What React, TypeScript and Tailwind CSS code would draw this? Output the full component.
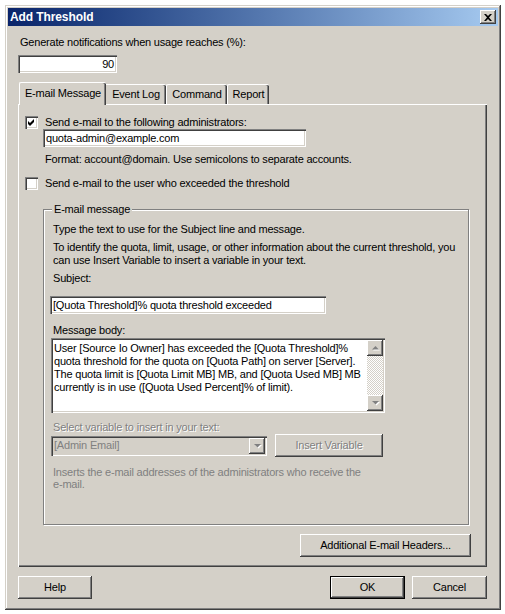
import React from "react";

const raised =
  "shadow-[inset_-1px_-1px_0_#404040,inset_1px_1px_0_#ffffff,inset_-2px_-2px_0_#808080,inset_2px_2px_0_#d4d0c8]";
const sunken =
  "shadow-[inset_1px_1px_0_#808080,inset_2px_2px_0_#404040,inset_-1px_-1px_0_#ffffff,inset_-2px_-2px_0_#d4d0c8]";

function Check({ checked }: { checked?: boolean }) {
  return (
    <div className={`w-[13px] h-[13px] bg-white shrink-0 ${sunken} flex items-center justify-center`}>
      {checked && (
        <svg width="13" height="13" viewBox="0 0 13 13">
          <path d="M3 5 L5 7 L9 3 L9 6 L5 10 L3 8 Z" fill="#000" />
        </svg>
      )}
    </div>
  );
}

function Arrow({ up, disabled }: { up?: boolean; disabled?: boolean }) {
  const c = disabled ? "#808080" : "#000";
  return (
    <svg width="7" height="4" viewBox="0 0 7 4" className="overflow-visible">
      {disabled && (
        <path d={up ? "M4.5 1 L8 4.5 L1 4.5 Z" : "M1 1 L8 1 L4.5 4.5 Z"} fill="#fff" />
      )}
      <path d={up ? "M3.5 0 L7 3.5 L0 3.5 Z" : "M0 0 L7 0 L3.5 3.5 Z"} fill={c} />
    </svg>
  );
}

export default function App() {
  return (
    <div className="w-[505px] h-[614px] bg-white pt-[5px] pl-[5px] font-['Liberation_Sans',Arial,sans-serif] text-[11px] leading-[13px] tracking-[-0.2px] text-black whitespace-nowrap">
      <div className="w-[496px] h-[605px] bg-[#d4d0c8] p-[3px] flex flex-col shadow-[inset_-1px_-1px_0_#404040,inset_1px_1px_0_#d4d0c8,inset_-2px_-2px_0_#808080,inset_2px_2px_0_#ffffff]">
        {/* Title bar */}
        <div className="h-[18px] bg-linear-to-r from-[#0a246a] to-[#a6caf0] flex items-center justify-between pl-[2px] pr-[2px]">
          <span className="text-white font-bold text-[12px] leading-[14px] tracking-[-0.1px]">Add Threshold</span>
          <div className={`w-[16px] h-[14px] bg-[#d4d0c8] ${raised} flex items-center justify-center`}>
            <svg width="8" height="7" viewBox="0 0 8 7">
              <path d="M0 0 H2 L4 2 L6 0 H8 L5 3.5 L8 7 H6 L4 5 L2 7 H0 L3 3.5 Z" fill="#000" />
            </svg>
          </div>
        </div>

        {/* Body */}
        <div className="flex flex-col pl-[10px] pr-[11px]">
          <div className="mt-[10px] ml-[2px]">Generate notifications when usage reaches (%):</div>
          <div className={`mt-[6px] w-[99px] h-[18px] bg-white ${sunken} flex items-center justify-end pr-[3px]`}>
            90
          </div>

          {/* Tabs */}
          <div className="mt-[9px] h-[22px] flex items-end pl-[1px]">
            <div className="relative z-10 -mb-px h-[23px] w-[87px] bg-[#d4d0c8] flex items-center justify-center rounded-tl-[2px] rounded-tr-[2px] border-l border-t border-white shadow-[inset_-1px_0_0_#404040,inset_-2px_0_0_#808080] pb-[2px]">
              E-mail Message
            </div>
            <div className="h-[20px] w-[60px] flex items-center justify-center rounded-tr-[2px] border-t border-white shadow-[inset_-1px_0_0_#404040,inset_-2px_0_0_#808080]">
              Event Log
            </div>
            <div className="h-[20px] w-[61px] flex items-center justify-center rounded-tl-[2px] rounded-tr-[2px] border-l border-t border-white shadow-[inset_-1px_0_0_#404040,inset_-2px_0_0_#808080]">
              Command
            </div>
            <div className="h-[20px] w-[42px] flex items-center justify-center rounded-tl-[2px] rounded-tr-[2px] border-l border-t border-white shadow-[inset_-1px_0_0_#404040,inset_-2px_0_0_#808080]">
              Report
            </div>
          </div>

          {/* Panel */}
          <div className="h-[463px] border-l border-t border-white shadow-[inset_-1px_-1px_0_#404040,inset_-2px_-2px_0_#808080] pl-[6px] flex flex-col">
            <div className="mt-[11px] h-[13px] flex items-center">
              <Check checked />
              <span className="ml-[7px]">Send e-mail to the following administrators:</span>
            </div>
            <div className={`ml-[18px] w-[263px] h-[18px] bg-white ${sunken} flex items-center pl-[3px]`}>
              quota-admin@example.com
            </div>
            <div className="mt-[6px] ml-[20px]">Format: account@domain. Use semicolons to separate accounts.</div>
            <div className="mt-[11px] h-[13px] flex items-center">
              <Check />
              <span className="ml-[7px]">Send e-mail to the user who exceeded the threshold</span>
            </div>

            {/* Group box */}
            <div className="mt-[19px] ml-[18px] w-[426px]">
              <div className="relative h-[316px] border border-[#808080] shadow-[inset_1px_1px_0_#ffffff,1px_1px_0_#ffffff] pl-[7px] flex flex-col">
                <span className="absolute -top-[7px] left-[8px] bg-[#d4d0c8] px-[2px]">E-mail message</span>
                <div className="mt-[13px] ml-[2px]">Type the text to use for the Subject line and message.</div>
                <div className="mt-[5px] ml-[2px]">
                  To identify the quota, limit, usage, or other information about the current threshold, you
                  <br />
                  can use Insert Variable to insert a variable in your text.
                </div>
                <div className="mt-[5px] ml-[2px]">Subject:</div>
                <div className={`mt-[11px] -ml-px w-[276px] h-[18px] bg-white ${sunken} flex items-center pl-[3px]`}>
                  [Quota Threshold]% quota threshold exceeded
                </div>
                <div className="mt-[10px] ml-[2px]">Message body:</div>
                <div className={`mt-[1px] w-[334px] h-[75px] bg-white ${sunken} p-[2px] flex`}>
                  <div className="flex-1 pl-[1px] pt-[2px] overflow-hidden">
                    User [Source Io Owner] has exceeded the [Quota Threshold]%
                    <br />
                    quota threshold for the quota on [Quota Path] on server [Server].
                    <br />
                    The quota limit is [Quota Limit MB] MB, and [Quota Used MB] MB
                    <br />
                    currently is in use ([Quota Used Percent]% of limit).
                  </div>
                  <div className="w-[16px] flex flex-col shrink-0">
                    <div className={`h-[16px] bg-[#d4d0c8] ${raised} flex items-center justify-center`}>
                      <Arrow up disabled />
                    </div>
                    <div className="flex-1 bg-[repeating-conic-gradient(#d4d0c8_0_25%,#ffffff_0_50%)] bg-[length:2px_2px]" />
                    <div className={`h-[16px] bg-[#d4d0c8] ${raised} flex items-center justify-center`}>
                      <Arrow disabled />
                    </div>
                  </div>
                </div>
                <div className="mt-[8px] ml-[2px] text-[#808080] [text-shadow:1px_1px_0_#ffffff]">
                  Select variable to insert in your text:
                </div>
                <div className="h-[23px] flex items-center">
                  <div className={`w-[216px] h-[20px] bg-[#d4d0c8] ${sunken} p-[2px] flex`}>
                    <div className="flex-1 flex items-center pl-[1px] text-[#808080]">[Admin Email]</div>
                    <div className={`w-[16px] bg-[#d4d0c8] ${raised} flex items-center justify-center`}>
                      <Arrow disabled />
                    </div>
                  </div>
                  <div className={`ml-[8px] w-[108px] h-[23px] bg-[#d4d0c8] ${raised} flex items-center justify-center text-[#808080] [text-shadow:1px_1px_0_#ffffff]`}>
                    Insert Variable
                  </div>
                </div>
                <div className="mt-[9px] ml-[2px] leading-[12px] text-[#808080]">
                  Inserts the e-mail addresses of the administrators who receive the
                  <br />
                  e-mail.
                </div>
              </div>
            </div>

            <div className={`mt-[9px] self-end mr-[16px] w-[171px] h-[23px] bg-[#d4d0c8] ${raised} flex items-center justify-center`}>
              Additional E-mail Headers...
            </div>
          </div>

          {/* Bottom buttons */}
          <div className="mt-[9px] flex">
            <div className={`w-[74px] h-[23px] ${raised} flex items-center justify-center`}>Help</div>
            <div className="ml-auto w-[75px] h-[23px] border border-black flex">
              <div className={`flex-1 ${raised} flex items-center justify-center`}>OK</div>
            </div>
            <div className={`ml-[7px] w-[75px] h-[23px] ${raised} flex items-center justify-center`}>Cancel</div>
          </div>
        </div>
      </div>
    </div>
  );
}
